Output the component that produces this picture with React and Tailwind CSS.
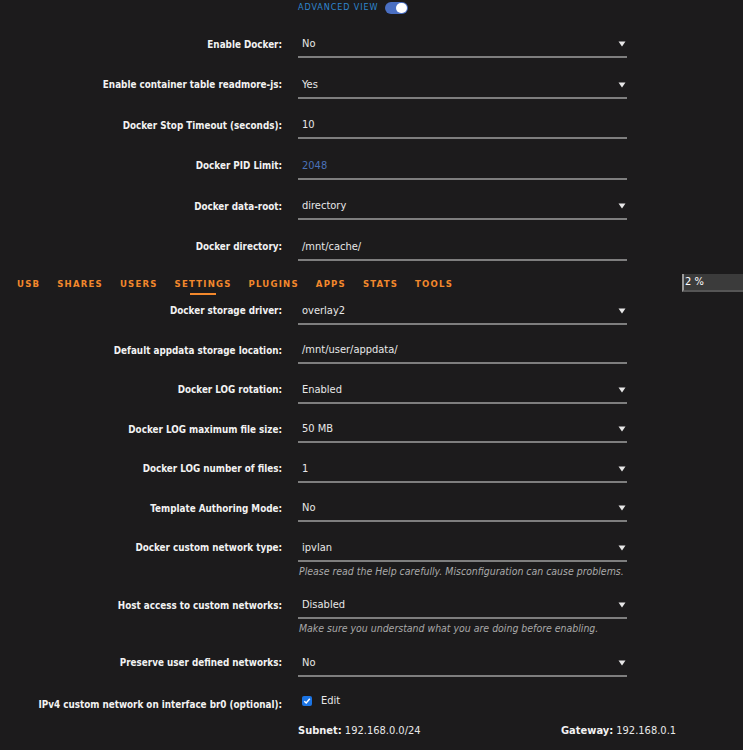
import { useState } from 'react';

const Arrow = () => (
  <svg width="8" height="6" viewBox="0 0 8 6" className="shrink-0">
    <path d="M0.5 0.5 H7.5 L4 5.5 Z" fill="#e6e6e6" />
  </svg>
);

const rowsTop = [
  { label: 'Enable Docker:', value: 'No', select: true },
  { label: 'Enable container table readmore-js:', value: 'Yes', select: true },
  { label: 'Docker Stop Timeout (seconds):', value: '10' },
  { label: 'Docker PID Limit:', value: '2048', placeholder: true },
  { label: 'Docker data-root:', value: 'directory', select: true },
  { label: 'Docker directory:', value: '/mnt/cache/' },
];

const rowsBottom = [
  { label: 'Docker storage driver:', value: 'overlay2', select: true },
  { label: 'Default appdata storage location:', value: '/mnt/user/appdata/' },
  { label: 'Docker LOG rotation:', value: 'Enabled', select: true },
  { label: 'Docker LOG maximum file size:', value: '50 MB', select: true },
  { label: 'Docker LOG number of files:', value: '1', select: true },
  { label: 'Template Authoring Mode:', value: 'No', select: true },
  {
    label: 'Docker custom network type:',
    value: 'ipvlan',
    select: true,
    help: 'Please read the Help carefully. Misconfiguration can cause problems.',
  },
  {
    label: 'Host access to custom networks:',
    value: 'Disabled',
    select: true,
    help: 'Make sure you understand what you are doing before enabling.',
  },
  { label: 'Preserve user defined networks:', value: 'No', select: true },
];

const tabs = ['USB', 'SHARES', 'USERS', 'SETTINGS', 'PLUGINS', 'APPS', 'STATS', 'TOOLS'];

function Row({ label, value, select, placeholder, help, top }) {
  return (
    <div className={top ? 'flex py-[7.25px]' : 'flex py-[6.75px]'}>
      <div className="w-[282px] shrink-0 h-[26px] flex items-center justify-end text-[9.8px] font-bold text-[#f2f2f2]">
        {label}
      </div>
      <div className="ml-4 w-[329px] flex flex-col">
        <div className="h-[26px] flex items-center justify-between pl-1 pr-[1px] border-b-2 border-[#7e7e7e]">
          <span className={placeholder ? 'text-[#4a71b8]' : 'text-[#e8e8e8]'}>{value}</span>
          {select && <Arrow />}
        </div>
        {help && (
          <div className="h-[16px] mt-[2px] pl-[1px] italic text-[10.45px] text-[#a9a9a9] flex items-center whitespace-nowrap">
            {help}
          </div>
        )}
      </div>
    </div>
  );
}

export default function App() {
  const [edit, setEdit] = useState(true);
  return (
    <div
      className="w-[743px] h-[750px] overflow-hidden bg-[#1c1b1c] text-[11px] text-[#e8e8e8]"
      style={{ fontFamily: '"DejaVu Sans Condensed", Lato, sans-serif' }}
    >
      {/* Advanced view toggle */}
      <div className="h-[25px] flex items-start pl-[298px]">
        <div className="flex items-center gap-[6px] mt-[1px]">
          <span className="text-[9px] tracking-[0.9px] text-[#2f86cf]">ADVANCED VIEW</span>
          <div className="w-[23px] h-[12px] rounded-full bg-[#4a6fc2] flex items-center justify-end pr-[1px]">
            <div className="w-[11px] h-[10px] rounded-full bg-white" />
          </div>
        </div>
      </div>

      {rowsTop.map((r) => (
        <Row key={r.label} top {...r} />
      ))}

      {/* Tab navigation */}
      <div className="h-[24px] flex items-end justify-between">
        <div className="flex gap-[17px] pl-[17px] pb-[1px]">
          {tabs.map((t) => (
            <div key={t} className="relative text-[9.5px] font-bold tracking-[1.2px] text-[#f2882c] leading-[14px]">
              {t}
              {t === 'SETTINGS' && (
                <div className="absolute left-1/2 -translate-x-1/2 -bottom-[4px] w-[26px] h-[2px] bg-[#f2882c]" />
              )}
            </div>
          ))}
        </div>
        <div className="w-[61px] h-[18px] bg-[#3b3b3b] border-l-2 border-[#9a9a9a] border-b-2 border-b-[#555] text-[11px] text-white flex items-center pl-[1px]">
          2 %
        </div>
      </div>

      {rowsBottom.map((r) => (
        <Row key={r.label} {...r} />
      ))}

      {/* IPv4 custom network */}
      <div className="flex pt-[8.5px] pb-[7px]">
        <div className="w-[282px] shrink-0 h-[26px] flex items-center justify-end text-[9.8px] font-bold text-[#f2f2f2]">
          IPv4 custom network on interface br0 (optional):
        </div>
        <div className="ml-4 w-[329px] h-[26px] flex items-center pl-1 -mt-[4px]">
          <button
            onClick={() => setEdit(!edit)}
            className="w-[10px] h-[10px] rounded-[2px] bg-[#1b74e4] flex items-center justify-center"
          >
            {edit && (
              <svg width="8" height="8" viewBox="0 0 8 8">
                <path d="M1.3 4.2 L3.2 6 L6.8 1.8" stroke="white" strokeWidth="1.5" fill="none" />
              </svg>
            )}
          </button>
          <span className="ml-[9px] text-[#e8e8e8]">Edit</span>
        </div>
      </div>
      <div className="flex pl-[298px] -mt-[2.5px]">
        <div className="w-[263px]">
          <span className="font-bold text-[#f2f2f2]">Subnet:</span> 192.168.0.0/24
        </div>
        <div>
          <span className="font-bold text-[#f2f2f2]">Gateway:</span> 192.168.0.1
        </div>
      </div>
    </div>
  );
}
